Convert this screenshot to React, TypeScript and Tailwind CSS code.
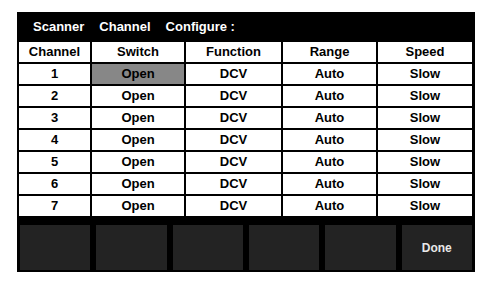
import React from 'react';
import clsx from 'clsx';

const columns = ['Channel', 'Switch', 'Function', 'Range', 'Speed'];
const widths = ['w-[71px]', 'w-[92px]', 'w-[95px]', 'w-[93px]', 'w-[94px]'];

const rows = [1, 2, 3, 4, 5, 6, 7].map((ch) => [String(ch), 'Open', 'DCV', 'Auto', 'Slow']);

export default function App() {
    return (
        <div className="w-[490px] h-[285px] bg-white pt-[12px] pl-[17px] font-['Liberation_Sans',Arial,sans-serif]">
            <div className="w-[458px] h-[260px] bg-black flex flex-col">
                {/* Title */}
                <div className="h-[30px] flex items-center gap-[15px] pl-[16px] text-white font-bold text-[13px]">
                    <span>Scanner</span>
                    <span>Channel</span>
                    <span>Configure :</span>
                </div>

                {/* Table */}
                <div className="flex flex-col gap-[2px] pl-[2px] pr-[3px]">
                    <Row cells={columns} />
                    {rows.map((r, i) => (
                        <Row key={i} cells={r} selected={i === 0 ? 1 : -1} />
                    ))}
                </div>

                {/* Soft keys */}
                <div className="flex gap-[6px] px-[3px] mt-[9px]">
                    {['', '', '', '', '', 'Done'].map((label, i) => (
                        <div
                            key={i}
                            className="flex-1 h-[45px] bg-[#232323] flex items-center justify-center text-[#e8e8e8] font-bold text-[12px]"
                        >
                            {label}
                        </div>
                    ))}
                </div>
            </div>
        </div>
    );
}

const Row = ({ cells, selected = -1 }: { cells: string[]; selected?: number }) => (
    <div className="flex gap-[2px] h-[20px]">
        {cells.map((c, i) => (
            <div
                key={i}
                className={clsx(
                    'h-full flex items-center justify-center text-black font-bold text-[13px]',
                    widths[i],
                    i === selected ? 'bg-[#878787]' : 'bg-white'
                )}
            >
                {c}
            </div>
        ))}
    </div>
);
